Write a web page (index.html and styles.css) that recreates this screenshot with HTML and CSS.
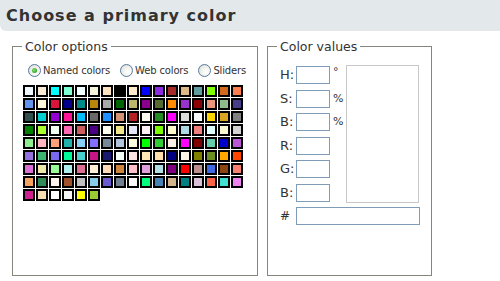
FILE: index.html
```html
<!DOCTYPE html>
<html>
<head>
<meta charset="utf-8">
<title>Choose a primary color</title>
<link rel="stylesheet" href="styles.css">
</head>
<body>
<h1 class="title">Choose a primary color</h1>
<div class="panels">
  <fieldset class="box options">
    <legend>Color options</legend>
    <div class="modes">
      <label class="mode"><input type="radio" name="mode" class="radio" checked><span>Named colors</span></label>
      <label class="mode"><input type="radio" name="mode" class="radio"><span>Web colors</span></label>
      <label class="mode"><input type="radio" name="mode" class="radio"><span>Sliders</span></label>
    </div>
    <div class="swatches">
      <i style="background:#F0F8FF"></i><i style="background:#FAEBD7"></i><i style="background:#00FFFF"></i><i style="background:#7FFFD4"></i><i style="background:#F0FFFF"></i><i style="background:#F5F5DC"></i><i style="background:#FFE4C4"></i><i style="background:#000000"></i><i style="background:#FFEBCD"></i><i style="background:#0000FF"></i><i style="background:#8A2BE2"></i><i style="background:#A52A2A"></i><i style="background:#DEB887"></i><i style="background:#5F9EA0"></i><i style="background:#7FFF00"></i><i style="background:#D2691E"></i><i style="background:#FF7F50"></i>
      <i style="background:#6495ED"></i><i style="background:#FFF8DC"></i><i style="background:#DC143C"></i><i style="background:#00008B"></i><i style="background:#008B8B"></i><i style="background:#B8860B"></i><i style="background:#A9A9A9"></i><i style="background:#006400"></i><i style="background:#BDB76B"></i><i style="background:#8B008B"></i><i style="background:#556B2F"></i><i style="background:#FF8C00"></i><i style="background:#9932CC"></i><i style="background:#8B0000"></i><i style="background:#E9967A"></i><i style="background:#8FBC8F"></i><i style="background:#483D8B"></i>
      <i style="background:#2F4F4F"></i><i style="background:#00CED1"></i><i style="background:#9400D3"></i><i style="background:#FF1493"></i><i style="background:#00BFFF"></i><i style="background:#696969"></i><i style="background:#1E90FF"></i><i style="background:#D19275"></i><i style="background:#B22222"></i><i style="background:#FFFAF0"></i><i style="background:#228B22"></i><i style="background:#FF00FF"></i><i style="background:#DCDCDC"></i><i style="background:#F8F8FF"></i><i style="background:#FFD700"></i><i style="background:#DAA520"></i><i style="background:#808080"></i>
      <i style="background:#008000"></i><i style="background:#ADFF2F"></i><i style="background:#F0FFF0"></i><i style="background:#FF69B4"></i><i style="background:#CD5C5C"></i><i style="background:#4B0082"></i><i style="background:#FFFFF0"></i><i style="background:#F0E68C"></i><i style="background:#E6E6FA"></i><i style="background:#FFF0F5"></i><i style="background:#7CFC00"></i><i style="background:#FFFACD"></i><i style="background:#ADD8E6"></i><i style="background:#F08080"></i><i style="background:#E0FFFF"></i><i style="background:#FAFAD2"></i><i style="background:#D3D3D3"></i>
      <i style="background:#90EE90"></i><i style="background:#FFB6C1"></i><i style="background:#FFA07A"></i><i style="background:#20B2AA"></i><i style="background:#87CEFA"></i><i style="background:#8470FF"></i><i style="background:#778899"></i><i style="background:#B0C4DE"></i><i style="background:#FFFFE0"></i><i style="background:#00FF00"></i><i style="background:#32CD32"></i><i style="background:#FAF0E6"></i><i style="background:#FF00FF"></i><i style="background:#800000"></i><i style="background:#66CDAA"></i><i style="background:#0000CD"></i><i style="background:#BA55D3"></i>
      <i style="background:#9370DB"></i><i style="background:#3CB371"></i><i style="background:#7B68EE"></i><i style="background:#00FA9A"></i><i style="background:#48D1CC"></i><i style="background:#C71585"></i><i style="background:#191970"></i><i style="background:#F5FFFA"></i><i style="background:#FFE4E1"></i><i style="background:#FFE4B5"></i><i style="background:#FFDEAD"></i><i style="background:#000080"></i><i style="background:#FDF5E6"></i><i style="background:#808000"></i><i style="background:#6B8E23"></i><i style="background:#FFA500"></i><i style="background:#FF4500"></i>
      <i style="background:#DA70D6"></i><i style="background:#EEE8AA"></i><i style="background:#98FB98"></i><i style="background:#AFEEEE"></i><i style="background:#DB7093"></i><i style="background:#FFEFD5"></i><i style="background:#FFDAB9"></i><i style="background:#CD853F"></i><i style="background:#FFC0CB"></i><i style="background:#DDA0DD"></i><i style="background:#B0E0E6"></i><i style="background:#800080"></i><i style="background:#FF0000"></i><i style="background:#BC8F8F"></i><i style="background:#4169E1"></i><i style="background:#8B4513"></i><i style="background:#FA8072"></i>
      <i style="background:#F4A460"></i><i style="background:#2E8B57"></i><i style="background:#FFF5EE"></i><i style="background:#A0522D"></i><i style="background:#C0C0C0"></i><i style="background:#87CEEB"></i><i style="background:#6A5ACD"></i><i style="background:#708090"></i><i style="background:#FFFAFA"></i><i style="background:#00FF7F"></i><i style="background:#4682B4"></i><i style="background:#D2B48C"></i><i style="background:#008080"></i><i style="background:#D8BFD8"></i><i style="background:#FF6347"></i><i style="background:#40E0D0"></i><i style="background:#EE82EE"></i>
      <i style="background:#D02090"></i><i style="background:#F5DEB3"></i><i style="background:#FFFFFF"></i><i style="background:#F5F5F5"></i><i style="background:#FFFF00"></i><i style="background:#9ACD32"></i>
    </div>
  </fieldset>
  <fieldset class="box values">
    <legend>Color values</legend>
    <div class="value-grid">
      <label class="lbl">H:</label><input class="field" type="text"><span class="unit deg">°</span>
      <div class="preview"></div>
      <label class="lbl">S:</label><input class="field" type="text"><span class="unit">%</span>
      <label class="lbl">B:</label><input class="field" type="text"><span class="unit">%</span>
      <label class="lbl">R:</label><input class="field" type="text"><span class="unit"></span>
      <label class="lbl">G:</label><input class="field" type="text"><span class="unit"></span>
      <label class="lbl">B:</label><input class="field" type="text"><span class="unit"></span>
      <label class="lbl hash">#</label><input class="field hex" type="text">
    </div>
  </fieldset>
</div>
</body>
</html>
```
FILE: styles.css
```css
html, body {
  margin: 0;
  padding: 0;
  background: #fff;
}
body {
  font-family: "DejaVu Sans", Verdana, sans-serif;
  color: #333;
  width: 500px;
  height: 281px;
  overflow: hidden;
}
.title {
  margin: 0;
  height: 31px;
  padding: 1px 0 0 6px;
  box-sizing: border-box;
  line-height: 30px;
  font-size: 16px;
  font-weight: bold;
  letter-spacing: 1px;
  color: #333;
  background: #e3e9eb;
  border-bottom-left-radius: 6px;
}
.panels {
  display: flex;
  margin-top: 8px;
  padding-left: 12px;
  height: 237px;
}
.box {
  margin: 0;
  border: 1px solid #85857a;
  box-sizing: border-box;
  min-width: 0;
}
.box legend {
  font-size: 12.5px;
  line-height: 15px;
  color: #333;
}
.options {
  width: 246px;
  padding: 9px 10px 0 10px;
}
.options legend {
  margin-left: -1px;
  padding: 0 3px;
}
.values {
  width: 165px;
  margin-left: 9px;
  padding: 12px 10px 0 12px;
}
.values legend {
  margin-left: -3px;
  padding: 0 3px;
}
.modes {
  display: flex;
  align-items: center;
  gap: 10px;
  height: 14px;
  margin: 0 0 8px 5px;
}
.mode {
  display: flex;
  align-items: center;
  gap: 2px;
  font-size: 10px;
  letter-spacing: -0.15px;
  color: #333;
}
.radio {
  appearance: none;
  -webkit-appearance: none;
  margin: 0;
  width: 13px;
  height: 13px;
  border-radius: 50%;
  border: 1px solid #557aa0;
  box-sizing: border-box;
  background: radial-gradient(circle at 65% 65%, #ffffff 0%, #f2f2ee 45%, #d8d8d0 100%);
  position: relative;
}
.radio:checked::after {
  content: "";
  position: absolute;
  left: 3px;
  top: 3px;
  width: 5px;
  height: 5px;
  border-radius: 50%;
  background: radial-gradient(circle at 40% 40%, #8ee07a 0%, #3cae2e 60%, #2a8f22 100%);
}
.swatches {
  display: grid;
  grid-template-columns: repeat(17, 12px);
  grid-auto-rows: 12px;
  gap: 1px;
}
.swatches i {
  display: block;
  box-sizing: border-box;
  border: 2px solid #000;
}
.value-grid {
  display: grid;
  grid-template-columns: 16px 34px 16px 73px;
  grid-auto-rows: 18px;
  row-gap: 5.5px;
  align-items: center;
}
.lbl {
  font-size: 13px;
  color: #333;
  line-height: 18px;
}
.hash {
  font-size: 12px;
}
.field {
  margin: 0;
  padding: 0;
  width: 34px;
  height: 18px;
  box-sizing: border-box;
  border: 1px solid #7f9db9;
  background: #fff;
  font: inherit;
}
.hex {
  grid-column: 2 / span 3;
  width: 124px;
}
.unit {
  font-size: 11px;
  padding-left: 3px;
  line-height: 18px;
  align-self: end;
}
.deg {
  align-self: start;
  line-height: 12px;
}
.preview {
  grid-column: 4;
  grid-row: 1 / span 6;
  align-self: stretch;
  margin: -1px 0;
  border: 1px solid #c8c8c8;
  background: #fff;
}
```
